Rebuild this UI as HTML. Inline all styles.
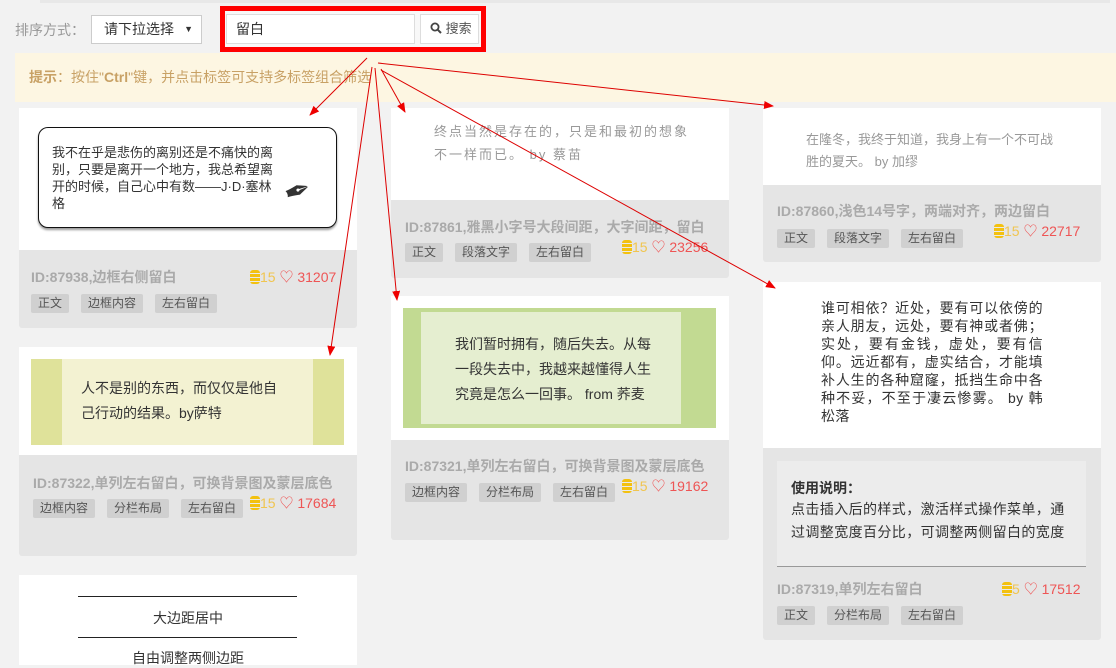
<!DOCTYPE html>
<html><head><meta charset="utf-8"><style>
*{margin:0;padding:0;box-sizing:border-box}
body{width:1116px;height:660px;overflow:hidden;background:#f2f2f2;font-family:"Liberation Sans","Noto Sans CJK SC",sans-serif;position:relative;color:#333}
.a{position:absolute}
.w{position:absolute;background:#fff}
.g{position:absolute;background:#e5e5e5;border-radius:0 0 3px 3px}
.id{position:absolute;font-weight:bold;color:#aaa;font-size:14px;white-space:nowrap}
.tag{display:inline-block;background:#d0d0d0;color:#555;font-size:12px;padding:0 7px;height:19px;line-height:19px;border-radius:2px;margin-right:12px}
.tags{position:absolute;white-space:nowrap}
.st{position:absolute;font-size:14px;white-space:nowrap}
.coin{display:inline-block;width:10px;height:14px;vertical-align:-2px;background:repeating-linear-gradient(#f3c10f 0 3px,#fff3 3px 4px);border-radius:3px}
.c{color:#f0c550}.h{color:#e55}
</style></head><body>
<div class="a" style="left:40px;top:0;width:1070px;height:3px;background:#e8e8e8"></div>
<div class="a" style="left:15px;top:20px;font-size:14px;color:#999">排序方式：</div>
<div class="a" style="left:91px;top:15px;width:111px;height:29px;background:#fff;border:1px solid #ccc;font-size:14px;line-height:27px;padding-left:12px">请下拉选择<span style="font-size:9px;position:absolute;right:8px">▼</span></div>
<div class="a" style="left:220px;top:6px;width:266px;height:46px;border:5px solid #f00;background:#f8f8f8"></div>
<div class="a" style="left:226px;top:14px;width:189px;height:30px;background:#fff;border:1px solid #ddd;font-size:14px;line-height:28px;padding-left:9px">留白</div>
<div class="a" style="left:420px;top:14px;width:59px;height:30px;background:#fff;border:1px solid #ddd;font-size:13px;line-height:28px;padding-left:9px;color:#555"><svg width="12" height="12" viewBox="0 0 12 12" style="vertical-align:-1px"><circle cx="5" cy="5" r="3.6" stroke="#444" stroke-width="1.8" fill="none"/><path d="M7.6 7.6L11 11" stroke="#444" stroke-width="2"/></svg> 搜索</div>
<div class="a" style="left:15px;top:53px;width:1101px;height:49px;background:#fdf6e2;font-size:14px;line-height:49px;padding-left:14px;color:#c8a165"><b>提示</b>：按住"<b>Ctrl</b>"键，并点击标签可支持多标签组合筛选</div>

<!-- col1 -->
<div class="w" style="left:19px;top:108px;width:338px;height:142px"></div>
<div class="a" style="left:38px;top:127px;width:299px;height:101px;border:1px solid #111;border-radius:10px;box-shadow:0 2px 2px #999;background:#fff"></div>
<div class="a" style="left:52px;top:144px;width:226px;font-size:13px;line-height:17px;color:#333">我不在乎是悲伤的离别还是不痛快的离别，只要是离开一个地方，我总希望离开的时候，自己心中有数——J·D·塞林格</div>
<div class="a" style="left:284px;top:172px;font-size:32px;transform:rotate(-20deg)">✒</div>
<div class="g" style="left:19px;top:250px;width:338px;height:78px"></div>
<div class="id" style="left:31px;top:267px">ID:87938,边框右侧留白</div>
<div class="st" style="left:250px;top:267px"><span class="coin"></span><span class="c">15</span> <span class="h">♡ 31207</span></div>
<div class="tags" style="left:31px;top:294px"><span class="tag">正文</span><span class="tag">边框内容</span><span class="tag">左右留白</span></div>

<div class="w" style="left:19px;top:347px;width:338px;height:108px"></div>
<div class="a" style="left:31px;top:359px;width:313px;height:86px;background:linear-gradient(90deg,#dfe29a 0 31px,#f3f2d2 31px 282px,#dfe29a 282px)"></div>
<div class="a" style="left:81px;top:376px;width:206px;font-size:14px;line-height:25px;color:#333">人不是别的东西，而仅仅是他自己行动的结果。by萨特</div>
<div class="g" style="left:19px;top:455px;width:338px;height:101px"></div>
<div class="id" style="left:33px;top:473px">ID:87322,单列左右留白，可换背景图及蒙层底色</div>
<div class="tags" style="left:33px;top:499px"><span class="tag">边框内容</span><span class="tag">分栏布局</span><span class="tag">左右留白</span></div>
<div class="st" style="left:250px;top:493px"><span class="coin"></span><span class="c">15</span> <span class="h">♡ 17684</span></div>

<div class="w" style="left:19px;top:575px;width:338px;height:90px"></div>
<div class="a" style="left:78px;top:596px;width:219px;height:1px;background:#222"></div>
<div class="a" style="left:19px;top:608px;width:338px;text-align:center;font-size:14px">大边距居中</div>
<div class="a" style="left:78px;top:637px;width:219px;height:1px;background:#222"></div>
<div class="a" style="left:19px;top:648px;width:338px;text-align:center;font-size:14px">自由调整两侧边距</div>

<!-- col2 -->
<div class="w" style="left:391px;top:108px;width:338px;height:92px"></div>
<div class="a" style="left:434px;top:120px;width:260px;font-size:13px;line-height:23px;color:#999;letter-spacing:2px">终点当然是存在的，只是和最初的想象不一样而已。 by 蔡苗</div>
<div class="g" style="left:391px;top:200px;width:338px;height:78px"></div>
<div class="id" style="left:405px;top:217px">ID:87861,雅黑小字号大段间距，大字间距，留白</div>
<div class="tags" style="left:405px;top:243px"><span class="tag">正文</span><span class="tag">段落文字</span><span class="tag">左右留白</span></div>
<div class="st" style="left:622px;top:237px"><span class="coin"></span><span class="c">15</span> <span class="h">♡ 23256</span></div>

<div class="w" style="left:391px;top:296px;width:338px;height:144px"></div>
<div class="a" style="left:403px;top:308px;width:313px;height:120px;background:#c2da92"></div>
<div class="a" style="left:421px;top:312px;width:260px;height:112px;background:#e5eed0"></div>
<div class="a" style="left:433px;top:332px;width:230px;font-size:14px;line-height:25px;padding-left:22px">我们暂时拥有，随后失去。从每一段失去中，我越来越懂得人生究竟是怎么一回事。 from 荞麦</div>
<div class="g" style="left:391px;top:440px;width:338px;height:100px"></div>
<div class="id" style="left:405px;top:456px">ID:87321,单列左右留白，可换背景图及蒙层底色</div>
<div class="tags" style="left:405px;top:483px"><span class="tag">边框内容</span><span class="tag">分栏布局</span><span class="tag">左右留白</span></div>
<div class="st" style="left:622px;top:476px"><span class="coin"></span><span class="c">15</span> <span class="h">♡ 19162</span></div>

<!-- col3 -->
<div class="w" style="left:763px;top:108px;width:338px;height:77px"></div>
<div class="a" style="left:806px;top:129px;width:252px;font-size:13px;line-height:22px;color:#999">在隆冬，我终于知道，我身上有一个不可战胜的夏天。 by 加缪</div>
<div class="g" style="left:763px;top:185px;width:338px;height:77px"></div>
<div class="id" style="left:777px;top:201px">ID:87860,浅色14号字，两端对齐，两边留白</div>
<div class="tags" style="left:777px;top:229px"><span class="tag">正文</span><span class="tag">段落文字</span><span class="tag">左右留白</span></div>
<div class="st" style="left:994px;top:221px"><span class="coin"></span><span class="c">15</span> <span class="h">♡ 22717</span></div>

<div class="w" style="left:763px;top:282px;width:338px;height:166px"></div>
<div class="a" style="left:821px;top:299px;width:222px;font-size:14px;line-height:18px;color:#333;text-align:justify;letter-spacing:0.4px">谁可相依？近处，要有可以依傍的亲人朋友，远处，要有神或者佛；实处，要有金钱，虚处，要有信仰。远近都有，虚实结合，才能填补人生的各种窟窿，抵挡生命中各种不妥，不至于凄云惨雾。 by 韩松落</div>
<div class="g" style="left:763px;top:448px;width:338px;height:192px"></div>
<div class="a" style="left:777px;top:461px;width:309px;height:106px;background:#ececec;border-bottom:1px solid #999"></div>
<div class="a" style="left:791px;top:478px;font-size:14px;font-weight:bold">使用说明：</div>
<div class="a" style="left:791px;top:498px;width:280px;font-size:14px;line-height:23px;letter-spacing:0.4px">点击插入后的样式，激活样式操作菜单，通过调整宽度百分比，可调整两侧留白的宽度</div>
<div class="id" style="left:777px;top:579px">ID:87319,单列左右留白</div>
<div class="st" style="left:1002px;top:579px"><span class="coin"></span><span class="c">5</span> <span class="h">♡ 17512</span></div>
<div class="tags" style="left:777px;top:606px"><span class="tag">正文</span><span class="tag">分栏布局</span><span class="tag">左右留白</span></div>

<svg class="a" style="left:0;top:0" width="1116" height="660">
<defs><marker id="m" markerWidth="10" markerHeight="8" refX="9" refY="4" orient="auto" markerUnits="userSpaceOnUse"><path d="M0,0L10,4L0,8z" fill="#e00"/></marker></defs>
<g stroke="#d00" stroke-width="1" fill="none" marker-end="url(#m)">
<line x1="367" y1="58" x2="310" y2="115"/>
<line x1="381" y1="69" x2="405" y2="112"/>
<line x1="378" y1="63" x2="773" y2="106"/>
<line x1="381" y1="70" x2="775" y2="288"/>
<line x1="375" y1="68" x2="397" y2="300"/>
<line x1="372" y1="67" x2="330" y2="355"/>
</g></svg>
</body></html>
